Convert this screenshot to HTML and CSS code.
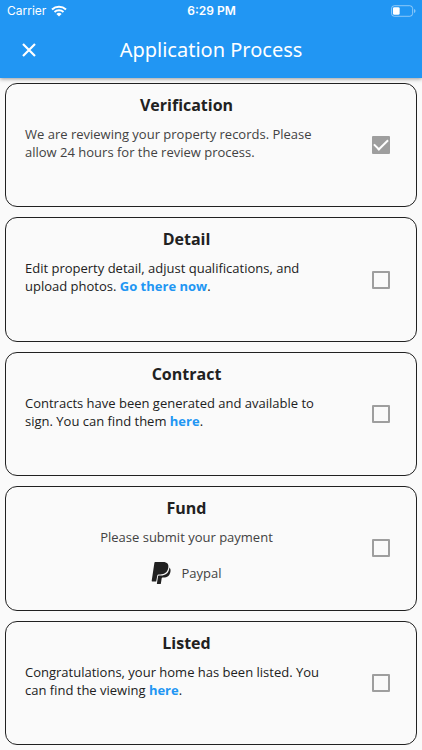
FILE: index.html
```html
<!DOCTYPE html>
<html lang="en">
<head>
<meta charset="utf-8">
<meta name="viewport" content="width=device-width, initial-scale=1">
<title>Application Process</title>
<link rel="stylesheet" href="styles.css">
</head>
<body>
<header class="header">
  <div class="status">
    <div class="carrier">
      <span>Carrier</span>
      <svg class="wifi" viewBox="0 0 16 12" aria-hidden="true">
        <path d="M1 4.400a10.300 10.300 0 0 1 14 0M3.500 7a6.700 6.700 0 0 1 9 0" fill="none" stroke="currentColor" stroke-width="2"/>
        <path d="M5.400 8.900a3.900 3.900 0 0 1 5.200 0L8 11.500z" fill="currentColor"/>
      </svg>
    </div>
    <time class="clock">6:29 PM</time>
    <svg class="battery" viewBox="0 0 26 12" aria-hidden="true">
      <rect x="0.500" y="0.500" width="22" height="11" rx="3" fill="none" stroke="#fff" stroke-opacity=".5"/>
      <rect x="2" y="2" width="7" height="8" rx="1.500" fill="#fff"/>
      <path d="M24 4q1.500.5 1.500 2T24 8z" fill="#fff" fill-opacity=".5"/>
    </svg>
  </div>
  <div class="bar">
    <button class="close" type="button" aria-label="Close">
      <svg viewBox="0 0 14 14" aria-hidden="true"><path d="M1 1l12 12M13 1L1 13" stroke="currentColor" stroke-width="2.200"/></svg>
    </button>
    <h1 class="title">Application Process</h1>
  </div>
</header>
<main class="steps">
  <section class="card">
    <div class="content">
      <h2 class="name"><label for="verification">Verification</label></h2>
      <p class="text muted">We are reviewing your property records. Please allow 24 hours for the review process.</p>
    </div>
    <input class="check" id="verification" type="checkbox" checked>
  </section>
  <section class="card">
    <div class="content">
      <h2 class="name"><label for="detail">Detail</label></h2>
      <p class="text">Edit property detail, adjust qualifications, and upload photos. <a href="#detail">Go there now</a>.</p>
    </div>
    <input class="check" id="detail" type="checkbox">
  </section>
  <section class="card">
    <div class="content">
      <h2 class="name"><label for="contract">Contract</label></h2>
      <p class="text">Contracts have been generated and available to sign. You can find them <a href="#contract">here</a>.</p>
    </div>
    <input class="check" id="contract" type="checkbox">
  </section>
  <section class="card">
    <div class="content">
      <h2 class="name"><label for="fund">Fund</label></h2>
      <p class="text muted centered">Please submit your payment</p>
      <button class="paypal" type="button">
        <svg viewBox="0 0 20 24" aria-hidden="true">
          <path d="M4.200 1H12c4.300 0 6 2.300 5.300 5.800-.9 4.700-3.800 6.700-8 6.700H7.500c-.7 0-1.100.4-1.200 1L5.200 20.500H1.300c-.5 0-.7-.3-.6-.8L3.400 1.800c.1-.5.300-.8.800-.8z" fill="currentColor"/>
          <path d="M18.400 6.400c1.200 1.100 1.400 2.700 1 4.600-.8 3.900-3.200 5.500-6.800 5.500h-.9c-.6 0-.9.300-1 .8l-.8 5.100c-.1.500-.4.700-.8.700H6.400c-.4 0-.6-.3-.5-.7l1.200-7.300c.1-.4.300-.6.800-.6h2c4.500 0 7.500-2.300 8.300-6.500.1-.6.200-1.100.2-1.600z" fill="currentColor"/>
        </svg>
        <span>Paypal</span>
      </button>
    </div>
    <input class="check" id="fund" type="checkbox">
  </section>
  <section class="card">
    <div class="content">
      <h2 class="name"><label for="listed">Listed</label></h2>
      <p class="text">Congratulations, your home has been listed. You can find the viewing <a href="#listed">here</a>.</p>
    </div>
    <input class="check" id="listed" type="checkbox">
  </section>
</main>
</body>
</html>
```
FILE: styles.css
```css
* {
  box-sizing: border-box;
}

body {
  margin: 0;
  min-height: 100vh;
  display: flex;
  flex-direction: column;
  background: #fafafa;
  color: #212121;
  font-family: "Open Sans", sans-serif;
}

button {
  border: 0;
  padding: 0;
  background: none;
  color: inherit;
  font: inherit;
}

.header {
  background: #2196f3;
  color: #fff;
  box-shadow: 0 1px 4px rgba(0, 0, 0, 0.4);
}

.status {
  display: grid;
  grid-template-columns: 1fr auto 1fr;
  align-items: center;
  height: 22px;
  padding: 0 6px 0 7px;
  font: 12px/16px Inter, sans-serif;
}

.carrier {
  display: flex;
  align-items: center;
  gap: 5px;
}

.wifi {
  width: 16px;
  height: 12px;
}

.clock {
  font-weight: 600;
}

.battery {
  width: 25px;
  height: 12px;
  justify-self: end;
}

.bar {
  display: grid;
  grid-template-columns: 58px 1fr 58px;
  align-items: center;
  height: 56px;
}

.close {
  height: 56px;
  display: grid;
  place-items: center;
}

.close svg {
  width: 14px;
  height: 14px;
}

.title {
  margin: 0;
  text-align: center;
  font: 400 20px/28px "Noto Sans", sans-serif;
}

.steps {
  flex: 1;
  display: grid;
  grid-auto-rows: 1fr;
  gap: 10px;
  padding: 5px;
}

.card {
  display: flex;
  align-items: center;
  gap: 24px;
  padding: 9px 26px 9px 19px;
  border: 1px solid #212121;
  border-radius: 12px;
}

.content {
  flex: 1;
  align-self: flex-start;
}

.name {
  margin: 0 0 8px;
  text-align: center;
  font-size: 16px;
  font-weight: 700;
  line-height: 24px;
}

.text {
  margin: 0;
  padding-right: 16px;
  font-size: 13px;
  line-height: 18px;
}

.muted {
  color: #424242;
}

.centered {
  padding: 0;
  text-align: center;
}

.text a {
  display: inline-block;
  color: #2196f3;
  font-weight: 700;
  text-decoration: none;
}

.paypal {
  display: flex;
  align-items: center;
  justify-content: center;
  gap: 10px;
  width: 100%;
  margin-top: 15px;
  color: #424242;
  font-size: 13px;
  line-height: 24px;
}

.paypal svg {
  width: 20px;
  height: 24px;
  color: #212121;
}

.check {
  appearance: none;
  flex: none;
  width: 18px;
  height: 18px;
  margin: 0;
  border: 2px solid #9e9e9e;
  border-radius: 1px;
}

.check:checked {
  background: #9e9e9e;
  display: grid;
  place-items: center;
}

.check:checked::before {
  content: "";
  width: 12px;
  height: 6px;
  border: solid #fff;
  border-width: 0 0 2px 2px;
  transform: translateY(-2px) rotate(-45deg);
}
```
